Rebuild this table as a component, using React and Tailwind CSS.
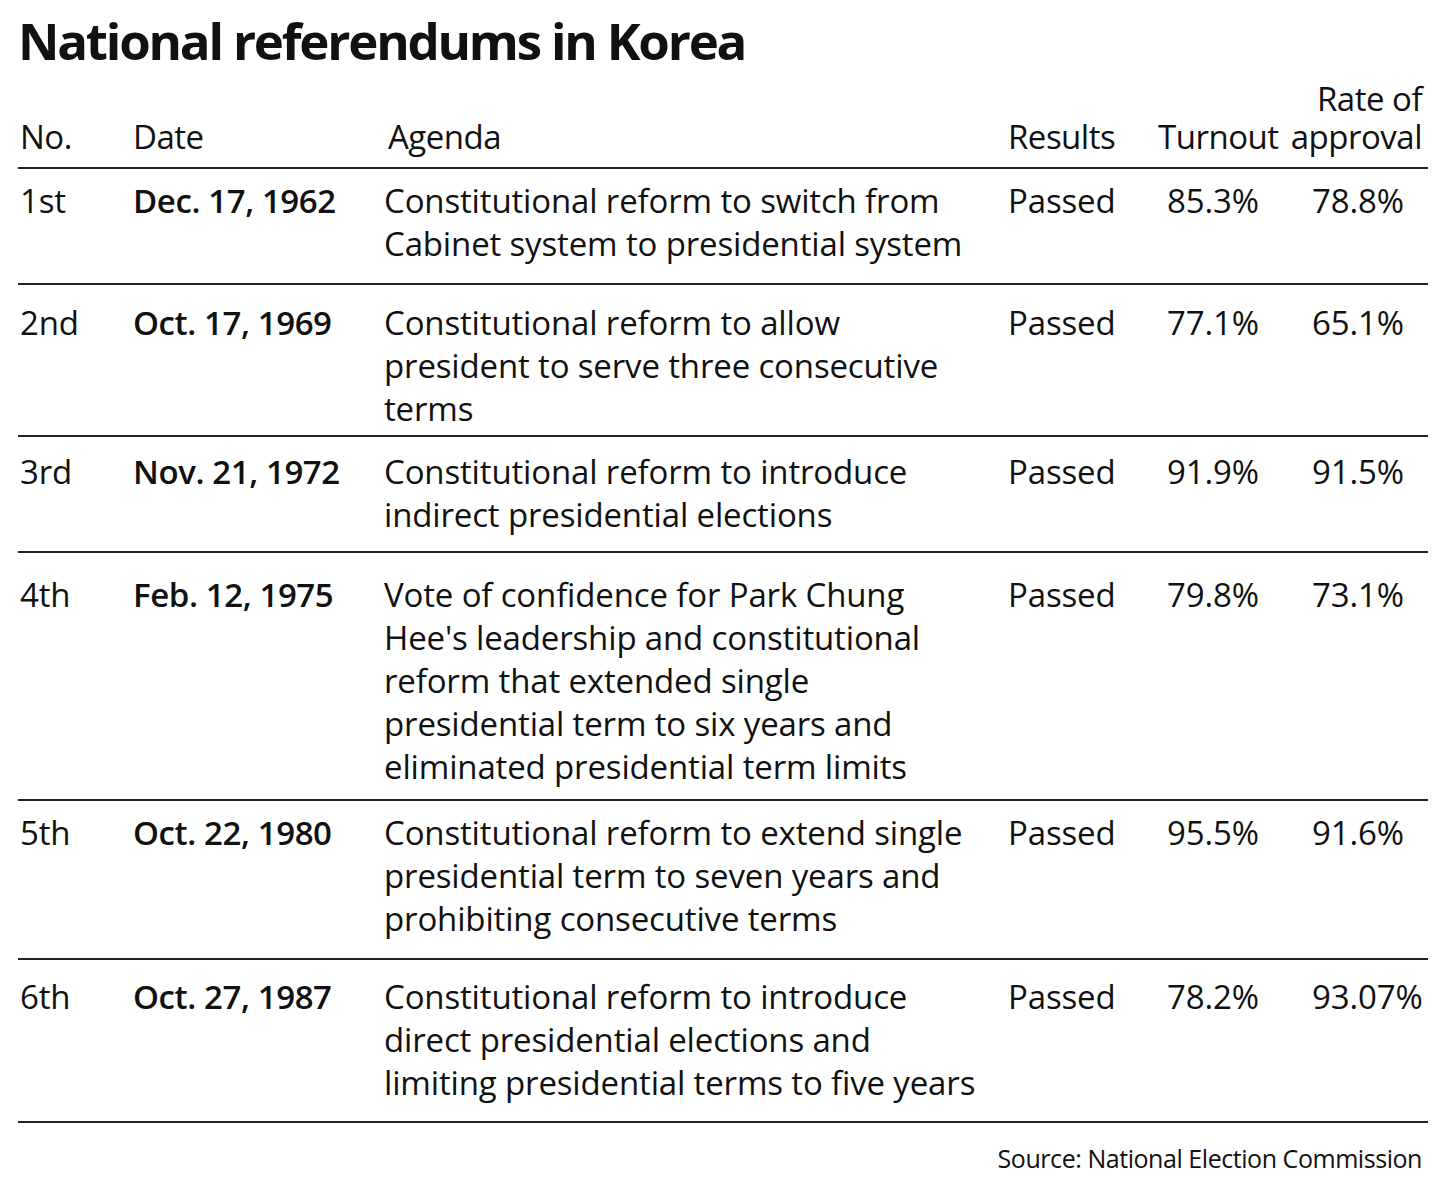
const rows = [
  {
    no: "1st",
    date: "Dec. 17, 1962",
    agenda: ["Constitutional reform to switch from", "Cabinet system to presidential system"],
    turnout: "85.3%",
    approval: "78.8%",
    h: "h-[116px]",
    pt: "pt-[10px]",
  },
  {
    no: "2nd",
    date: "Oct. 17, 1969",
    agenda: ["Constitutional reform to allow", "president to serve three consecutive", "terms"],
    turnout: "77.1%",
    approval: "65.1%",
    h: "h-[152px]",
    pt: "pt-[16px]",
  },
  {
    no: "3rd",
    date: "Nov. 21, 1972",
    agenda: ["Constitutional reform to introduce", "indirect presidential elections"],
    turnout: "91.9%",
    approval: "91.5%",
    h: "h-[116px]",
    pt: "pt-[13px]",
  },
  {
    no: "4th",
    date: "Feb. 12, 1975",
    agenda: [
      "Vote of confidence for Park Chung",
      "Hee's leadership and constitutional",
      "reform that extended single",
      "presidential term to six years and",
      "eliminated presidential term limits",
    ],
    turnout: "79.8%",
    approval: "73.1%",
    h: "h-[248px]",
    pt: "pt-[20px]",
  },
  {
    no: "5th",
    date: "Oct. 22, 1980",
    agenda: [
      "Constitutional reform to extend single",
      "presidential term to seven years and",
      "prohibiting consecutive terms",
    ],
    turnout: "95.5%",
    approval: "91.6%",
    h: "h-[159px]",
    pt: "pt-[10px]",
  },
  {
    no: "6th",
    date: "Oct. 27, 1987",
    agenda: [
      "Constitutional reform to introduce",
      "direct presidential elections and",
      "limiting presidential terms to five years",
    ],
    turnout: "78.2%",
    approval: "93.07%",
    h: "h-[165px] border-b-2",
    pt: "pt-[15px]",
  },
];

function App() {
  return (
    <div className="min-h-screen bg-white text-[#111] font-['Open_Sans',sans-serif] px-[18px] pr-[12px] pt-[8px]">
      <h1 className="text-[51px] leading-[64px] font-bold tracking-[-2.2px] whitespace-nowrap">
        National referendums in Korea
      </h1>

      {/* column headings */}
      <div className="flex items-end h-[95px] pb-[11px] text-[33px] leading-[38px] tracking-[-0.5px] whitespace-nowrap">
        <div className="w-[115px] pl-[2px]">No.</div>
        <div className="w-[255px]">Date</div>
        <div className="w-[620px]">Agenda</div>
        <div className="w-[150px]">Results</div>
        <div>Turnout</div>
        <div className="flex-1 text-right pr-[6px]">
          Rate of
          <br />
          approval
        </div>
      </div>

      {rows.map((r) => (
        <div
          key={r.no}
          className={`flex border-t-2 border-[#222] text-[33px] leading-[43px] tracking-[-0.15px] whitespace-nowrap ${r.h} ${r.pt}`}
        >
          <div className="w-[115px] pl-[2px]">{r.no}</div>
          <div className="w-[251px] font-semibold tracking-[-0.4px]">{r.date}</div>
          <div className="w-[624px]">
            {r.agenda.map((line) => (
              <div key={line}>{line}</div>
            ))}
          </div>
          <div className="w-[150px]">Passed</div>
          <div className="w-[154px] pl-[9px]">{r.turnout}</div>
          <div className="flex-1">{r.approval}</div>
        </div>
      ))}

      <div className="mt-[20px] text-right pr-[6px] text-[25px] leading-[30px] tracking-[-0.45px]">
        Source: National Election Commission
      </div>
    </div>
  );
}

export default App;
